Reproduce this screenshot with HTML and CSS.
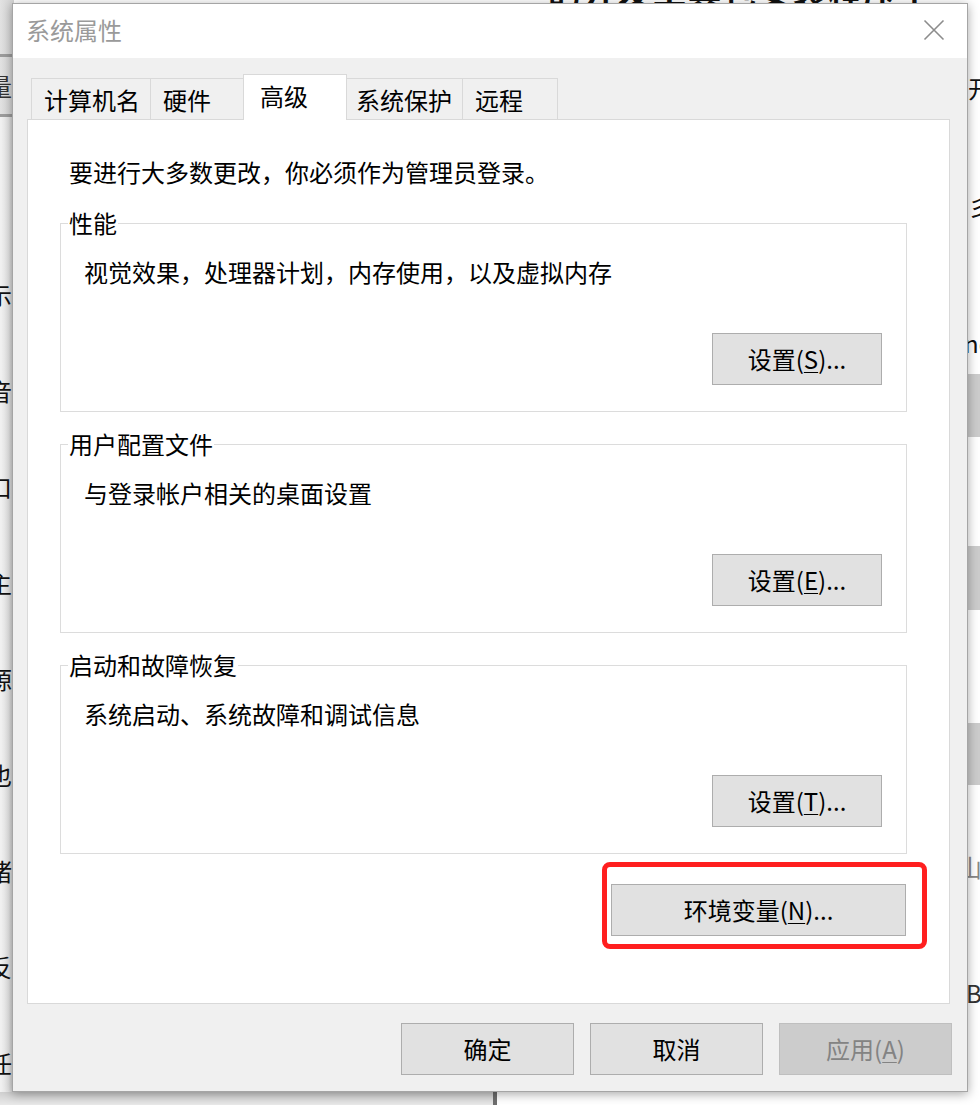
FILE: index.html
```html
<!DOCTYPE html>
<html lang="zh-CN">
<head>
<meta charset="utf-8">
<title>系统属性</title>
<link rel="stylesheet" href="styles.css">
</head>
<body>
<div class="desk">
  <div class="bg-top">的开发工具包安装程序中</div>
  <div class="bg-left">
    <div class="bg-left-head">
      <div class="bg-bar-line"></div>
      <div class="bg-left-head-text">量</div>
      <div class="bg-bar-line"></div>
    </div>
    <div class="bg-left-list">
      <span>示</span><span>音</span><span>口</span><span>主</span><span>源</span><span>也</span><span>诸</span><span>反</span><span>任</span>
    </div>
  </div>
  <div class="bg-right">
    <div class="bg-right-item r1">开</div>
    <div class="bg-right-item r2">彡</div>
    <div class="bg-right-item r3">nc</div>
    <div class="bg-right-block b1"></div>
    <div class="bg-right-block b2"></div>
    <div class="bg-right-block b3"></div>
    <div class="bg-right-item r4">山</div>
    <div class="bg-right-item r5">BH</div>
  </div>
  <div class="bg-bottom"><div class="bg-bottom-gray"></div><div class="bg-bottom-bar"></div></div>

  <div class="dialog">
    <div class="titlebar">
      <span class="title">系统属性</span>
      <svg class="close" width="22" height="22" viewBox="0 0 22 22"><path d="M1.5 1.5 L20.5 20.5 M20.5 1.5 L1.5 20.5" stroke="#8c8c8c" stroke-width="1.6" fill="none"/></svg>
    </div>
    <div class="body">
      <div class="tabs">
        <div class="tab tab-1">计算机名</div>
        <div class="tab tab-2">硬件</div>
        <div class="tab tab-active">高级</div>
        <div class="tab tab-4">系统保护</div>
        <div class="tab tab-5">远程</div>
      </div>
      <div class="panel">
        <p class="intro">要进行大多数更改，你必须作为管理员登录。</p>
        <fieldset class="group">
          <legend>性能</legend>
          <div class="group-body">
            <p class="desc">视觉效果，处理器计划，内存使用，以及虚拟内存</p>
            <div class="group-actions"><button class="btn">设置(<u>S</u>)...</button></div>
          </div>
        </fieldset>
        <fieldset class="group group-next">
          <legend>用户配置文件</legend>
          <div class="group-body">
            <p class="desc">与登录帐户相关的桌面设置</p>
            <div class="group-actions"><button class="btn">设置(<u>E</u>)...</button></div>
          </div>
        </fieldset>
        <fieldset class="group group-next">
          <legend>启动和故障恢复</legend>
          <div class="group-body">
            <p class="desc">系统启动、系统故障和调试信息</p>
            <div class="group-actions"><button class="btn">设置(<u>T</u>)...</button></div>
          </div>
        </fieldset>
        <div class="env-row">
          <div class="env-wrap">
            <button class="btn btn-env">环境变量(<u>N</u>)...</button>
            <div class="highlight"></div>
          </div>
        </div>
      </div>
      <div class="footer">
        <button class="btn btn-foot">确定</button>
        <button class="btn btn-foot">取消</button>
        <button class="btn btn-foot btn-disabled">应用(<u>A</u>)</button>
      </div>
    </div>
  </div>
</div>
</body>
</html>
```
FILE: styles.css
```css
* { box-sizing: border-box; }
html, body { margin: 0; padding: 0; }
body {
  width: 980px;
  height: 1105px;
  overflow: hidden;
  background: #ffffff;
  font-family: "Noto Sans CJK SC", "Microsoft YaHei", sans-serif;
  font-size: 24px;
  color: #000;
}
.desk {
  position: relative;
  width: 980px;
  height: 1105px;
  overflow: hidden;
  background: #ffffff;
}

/* background windows */
.bg-top {
  position: absolute;
  left: 548px;
  top: -27px;
  font-size: 33px;
  font-weight: 700;
  line-height: 36px;
  letter-spacing: 2px;
  color: #111;
  white-space: nowrap;
}
.bg-left {
  position: absolute;
  left: 0;
  top: 0;
  width: 14px;
  height: 1092px;
  background: linear-gradient(to right, #f2f2f2 0, #e6e6e6 60%, #cfcfcf 100%);
  overflow: hidden;
}
.bg-left-head {
  background: linear-gradient(to right, #e2e2e2, #d4d4d4);
  padding-top: 54px;
}
.bg-bar-line { height: 3px; background: #9c9c9c; }
.bg-left-head-text {
  height: 57px;
  line-height: 57px;
  margin-left: -12px;
  color: #333;
}
.bg-left-list {
  display: flex;
  flex-direction: column;
  margin-top: 130px;
  margin-left: -12px;
}
.bg-left-list span {
  height: 96px;
  line-height: 96px;
  color: #111;
}
.bg-right {
  position: absolute;
  left: 968px;
  top: 0;
  width: 12px;
  height: 1092px;
  background: #fff;
  overflow: hidden;
}
.bg-right-item {
  position: absolute;
  left: 0;
  line-height: 30px;
  color: #111;
  white-space: nowrap;
}
.r1 { top: 73px; }
.r2 { top: 191px; }
.r3 { top: 328px; left: -4px; }
.r4 { top: 852px; left: -10px; color: #888; }
.r5 { top: 978px; left: -2px; color: #333; }
.bg-right-block {
  position: absolute;
  left: 0;
  width: 12px;
  background: #cccccc;
}
.b1 { top: 374px; height: 63px; }
.b2 { top: 546px; height: 64px; }
.b3 { top: 723px; height: 62px; }
.bg-bottom {
  position: absolute;
  left: 0;
  top: 1092px;
  width: 980px;
  height: 13px;
  display: flex;
}
.bg-bottom-gray {
  width: 493px;
  background: linear-gradient(to bottom, #cfcfcf, #e9e9e9);
}
.bg-bottom-bar { width: 4px; background: #6e6e6e; }

/* dialog */
.dialog {
  position: absolute;
  left: 12px;
  top: 3px;
  width: 956px;
  height: 1089px;
  border: 1px solid #a5a5a5;
  background: #f0f0f0;
  box-shadow: 0 2px 10px rgba(0, 0, 0, 0.35);
  display: flex;
  flex-direction: column;
}
.titlebar {
  height: 54px;
  background: #ffffff;
  display: flex;
  align-items: center;
  justify-content: space-between;
  padding: 0 22px 0 13px;
  flex: none;
}
.title {
  color: #9a9a9a;
  line-height: 32px;
  margin-top: -3px;
}
.close { display: block; margin-top: -2px; }

.body {
  flex: 1;
  padding: 16px 15px 0 14px;
  background: #f0f0f0;
}
.tabs {
  display: flex;
  align-items: flex-end;
  height: 45px;
  margin-left: 4px;
  position: relative;
  z-index: 2;
}
.tab {
  height: 41px;
  border: 1px solid #d9d9d9;
  border-bottom: none;
  background: #f0f0f0;
  padding: 3px 0 0 12px;
  line-height: 36px;
  white-space: nowrap;
  margin-left: -1px;
}
.tab-1 { width: 120px; margin-left: 0; }
.tab-2 { width: 94px; }
.tab-4 { width: 117px; padding-left: 9px; }
.tab-5 { width: 96px; }
.tab-active {
  width: 104px;
  height: 46px;
  margin-bottom: -1px;
  background: #ffffff;
  padding: 3px 0 0 16px;
  position: relative;
  z-index: 3;
}

.panel {
  height: 885px;
  margin-right: 2px;
  background: #ffffff;
  border: 1px solid #d9d9d9;
  padding: 36px 42px 0 32px;
  position: relative;
  z-index: 1;
}
.intro {
  margin: 0 0 0 9px;
  line-height: 32px;
}
.group {
  margin: 21px 0 0 0;
  padding: 0;
  border: 1px solid #dcdcdc;
  min-width: 0;
}
.group-next { margin-top: 18px; }
.group legend {
  margin-left: 7px;
  padding: 0 1px;
  line-height: 28px;
}
.group-body {
  padding: 19px 24px 26px 23px;
}
.desc {
  margin: 0;
  line-height: 32px;
}
.group-actions {
  display: flex;
  justify-content: flex-end;
  margin-top: 45px;
}
.btn {
  width: 170px;
  height: 52px;
  padding: 0;
  border: 1px solid #adadad;
  background: #e1e1e1;
  font-family: inherit;
  font-size: 24px;
  color: #000;
  line-height: 30px;
}
.btn u { text-underline-offset: 3px; text-decoration-thickness: 1px; }
.env-row {
  display: flex;
  justify-content: flex-end;
  margin-top: 30px;
  margin-right: 1px;
}
.env-wrap { position: relative; }
.btn-env { width: 295px; display: block; }
.highlight {
  position: absolute;
  left: -9px;
  top: -22px;
  right: -21px;
  bottom: -13px;
  border: 5px solid #ff1f1f;
  border-radius: 8px;
  pointer-events: none;
}
.footer {
  display: flex;
  justify-content: flex-end;
  gap: 16px;
  margin-top: 19px;
}
.btn-foot { width: 173px; }
.btn-disabled {
  background: #cccccc;
  border-color: #bfbfbf;
  color: #838383;
}
```
